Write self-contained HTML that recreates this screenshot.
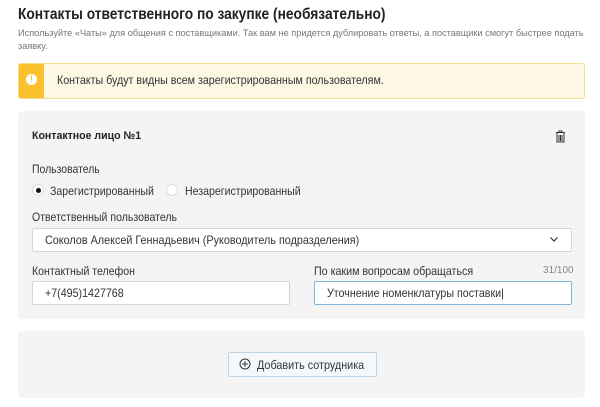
<!DOCTYPE html>
<html><head><meta charset="utf-8"><style>
*{box-sizing:border-box;margin:0;padding:0}
body{width:600px;height:407px;background:#fff;font-family:"Liberation Sans","Noto Sans CJK SC",sans-serif;color:#222;position:relative;overflow:hidden}
.a{position:absolute;white-space:nowrap;transform-origin:0 50%}
.t{left:18px;top:6px;font-size:16px;font-weight:bold;color:#222;transform:scaleX(0.86)}
.s{left:18px;font-size:9.2px;color:#777}
.alert{left:18px;top:63px;width:567px;height:36px;background:#fdf8e4;border:1px solid #f3dc8a;border-radius:3px;overflow:hidden}
.strip{position:absolute;left:0;top:0;bottom:0;width:25px;background:#fbc02d}
.card{background:#f4f4f4;border-radius:4px}
.inp{background:#fff;border:1px solid #d4d4d4;border-radius:2px}
.lbl{font-size:12px;color:#333}
</style></head><body>
<div class="a t">Контакты ответственного по закупке (необязательно)</div>
<div class="a s" style="top:28px">Используйте «Чаты» для общения с поставщиками. Так вам не придется дублировать ответы, а поставщики смогут быстрее подать</div>
<div class="a s" style="top:41px">заявку.</div>
<div class="a alert"><div class="strip"><div style="position:absolute;left:7px;top:10px;width:11px;height:11px;border-radius:50%;background:#fff;color:#fbc02d;font-size:9px;font-weight:bold;text-align:center;line-height:11px">!</div></div></div>
<div class="a lbl" style="left:57px;top:73px;transform:scaleX(0.89)">Контакты будут видны всем зарегистрированным пользователям.</div>
<div class="a card" style="left:18px;top:111px;width:567px;height:208px"></div>
<div class="a" style="left:32px;top:130px;font-size:11px;font-weight:bold;transform:scaleX(0.96)">Контактное лицо №1</div>
<svg class="a" style="left:555px;top:130px" width="11" height="13" viewBox="0 0 11 13"><path d="M1 2.5h9M4 2.5V1h3v1.5M2 3v9h7V3M4 5v6M5.5 5v6M7 5v6" fill="none" stroke="#333" stroke-width="1"/></svg>
<div class="a lbl" style="left:32px;top:162px;transform:scaleX(0.87)">Пользователь</div>
<div class="a" style="left:32px;top:184px;width:12px;height:12px;border-radius:50%;background:#fff;border:1px solid #ddd"><div style="position:absolute;left:2.5px;top:2.5px;width:5px;height:5px;border-radius:50%;background:#111"></div></div>
<div class="a lbl" style="left:50px;top:184px;transform:scaleX(0.88)">Зарегистрированный</div>
<div class="a" style="left:166px;top:184px;width:12px;height:12px;border-radius:50%;background:#fff;border:1px solid #ddd"></div>
<div class="a lbl" style="left:185px;top:184px;transform:scaleX(0.88)">Незарегистрированный</div>
<div class="a lbl" style="left:32px;top:210px;transform:scaleX(0.88)">Ответственный пользователь</div>
<div class="a inp" style="left:32px;top:228px;width:540px;height:24px"></div>
<div class="a lbl" style="left:45px;top:233px;transform:scaleX(0.9)">Соколов Алексей Геннадьевич (Руководитель подразделения)</div>
<svg class="a" style="left:549px;top:236px" width="10" height="7" viewBox="0 0 10 7"><path d="M1.5 1.5l3.5 3.5 3.5-3.5" fill="none" stroke="#333" stroke-width="1.2"/></svg>
<div class="a lbl" style="left:32px;top:264px;transform:scaleX(0.88)">Контактный телефон</div>
<div class="a lbl" style="left:314px;top:264px;transform:scaleX(0.89)">По каким вопросам обращаться</div>
<div class="a" style="left:543px;top:265px;font-size:10px;color:#888">31/100</div>
<div class="a inp" style="left:32px;top:281px;width:258px;height:24px"></div>
<div class="a lbl" style="left:45px;top:286px;transform:scaleX(0.89)">+7(495)1427768</div>
<div class="a inp" style="left:314px;top:281px;width:258px;height:24px;border-color:#7fb6dc"></div>
<div class="a lbl" style="left:327px;top:286px;transform:scaleX(0.89)">Уточнение номенклатуры поставки|</div>
<div class="a card" style="left:18px;top:331px;width:567px;height:67px"></div>
<div class="a" style="left:228px;top:352px;width:149px;height:25px;background:#f4f8fb;border:1px solid #bcd6e8;border-radius:2px"></div>
<div class="a lbl" style="left:257px;top:358px;transform:scaleX(0.9)">Добавить сотрудника</div>
<svg class="a" style="left:239px;top:358px" width="12" height="12" viewBox="0 0 12 12"><circle cx="6" cy="6" r="5" fill="none" stroke="#333"/><path d="M6 3v6M3 6h6" stroke="#333"/></svg>
</body></html>
